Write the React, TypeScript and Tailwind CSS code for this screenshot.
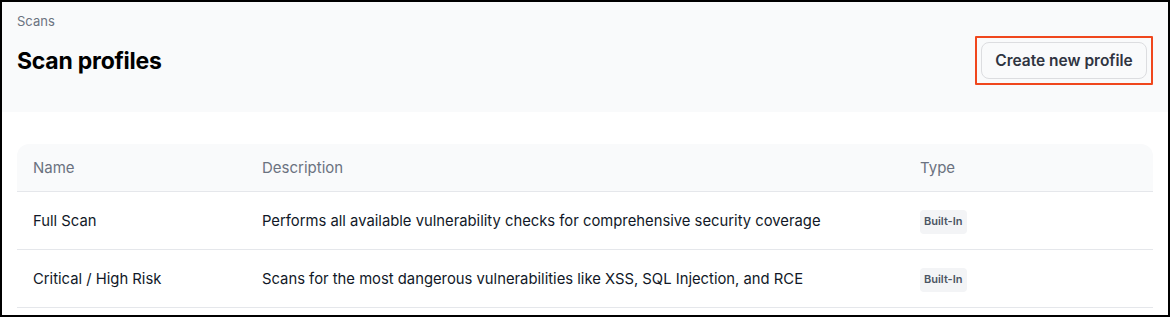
const profiles = [
    {
        name: 'Full Scan',
        description: 'Performs all available vulnerability checks for comprehensive security coverage',
        type: 'Built-In',
    },
    {
        name: 'Critical / High Risk',
        description: 'Scans for the most dangerous vulnerabilities like XSS, SQL Injection, and RCE',
        type: 'Built-In',
    },
];

export default function App() {
    return (
        <div className="h-[317px] w-[1170px] overflow-hidden border-2 border-black bg-white font-['Inter',sans-serif]">
            <div className="flex h-[110px] flex-col bg-[#f9fafb] px-[15px] pt-[11px]">
                <p className="text-[13px] leading-[16px] text-[#6b7280]">Scans</p>
                <div className="mt-[7px] flex items-center justify-between">
                    <h1 className="text-[23px] font-bold leading-[30px] tracking-[-0.01em] text-black">Scan profiles</h1>
                    <div className="rounded-[1px] border-2 border-[#f0471d] p-[4px]">
                        <button
                            type="button"
                            className="h-[37px] w-[166px] rounded-lg border border-[#dcdde0] bg-[#f9fafb] text-[15.5px] font-semibold text-[#2f3441]"
                        >
                            Create new profile
                        </button>
                    </div>
                </div>
            </div>

            <div className="px-[15px] pt-[32px]">
                <div className="overflow-hidden rounded-t-xl">
                    <div className="grid h-[48px] grid-cols-[229px_658px_1fr] items-center border-b border-[#e5e7eb] bg-[#f9fafb] px-[16px] pt-[1px] text-[15px] text-[#6b7280]">
                        <span>Name</span>
                        <span>Description</span>
                        <span>Type</span>
                    </div>
                    {profiles.map((p) => (
                        <div
                            key={p.name}
                            className="grid h-[58px] grid-cols-[229px_658px_1fr] items-center border-b border-[#e5e7eb] px-[16px] pt-[2px] text-[14.8px] text-[#111827]"
                        >
                            <span>{p.name}</span>
                            <span>{p.description}</span>
                            <span>
                                <span className="inline-flex h-[24px] items-center rounded bg-[#f3f4f6] px-[4px] text-[11px] font-semibold text-[#4b5563]">
                                    {p.type}
                                </span>
                            </span>
                        </div>
                    ))}
                </div>
            </div>
        </div>
    );
}
